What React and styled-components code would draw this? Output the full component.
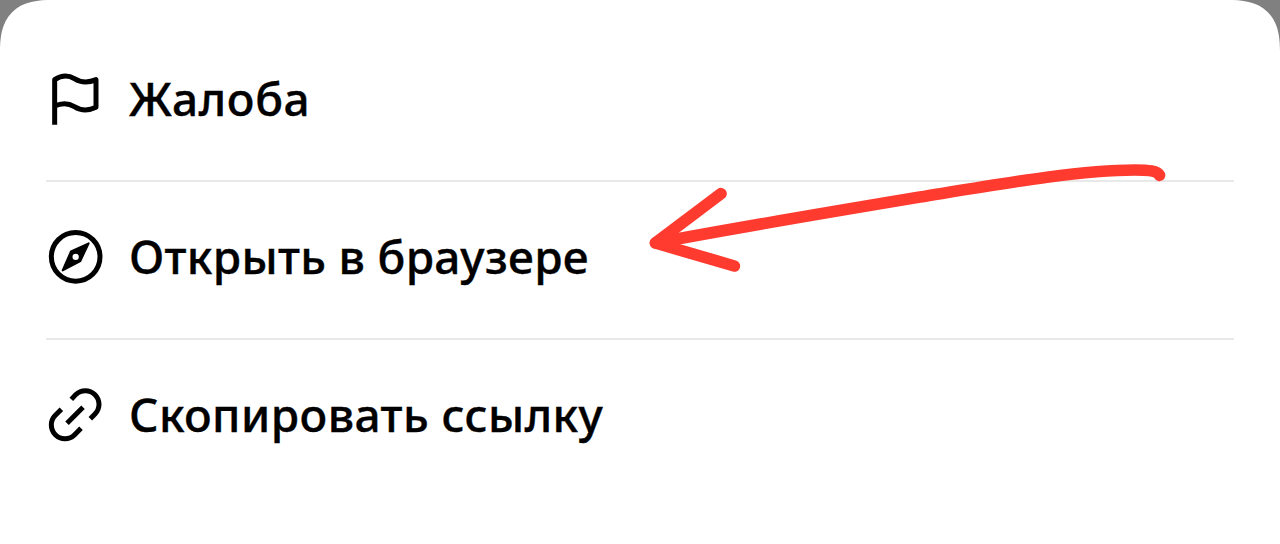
import React from 'react'
import styled, { createGlobalStyle } from 'styled-components'

const GlobalStyle = createGlobalStyle`
  body {
    margin: 0;
    background: #808080;
  }
`

const Sheet = styled.main`
  position: relative;
  box-sizing: border-box;
  height: 544px;
  padding: 24px 46px 0;
  overflow: hidden;
  background: #fff;
  border-radius: 42px 42px 0 0;

  @supports (corner-shape: superellipse(1.38)) {
    border-radius: 52px 52px 0 0;
    corner-shape: superellipse(1.38);
  }
`

const Menu = styled.ul`
  margin: 0;
  padding: 0;
  list-style: none;
`

const Item = styled.li`
  box-sizing: border-box;
  height: 158px;
  padding: 0 0 6px;
  display: flex;
  align-items: center;
  border-bottom: 2px solid #e9e9e9;

  &:last-child {
    border-bottom-color: transparent;
  }
`

const Icon = styled.svg`
  flex: none;
  width: 70px;
  height: 70px;
  margin-left: -6px;
  fill: none;
  stroke: #000;
  stroke-width: 15;
  stroke-linejoin: round;
`

const Label = styled.span`
  margin-left: 19px;
  padding-bottom: 2px;
  color: #000;
  font-family: 'Noto Sans', 'Open Sans', sans-serif;
  font-size: 46px;
  font-weight: 500;
  line-height: 60px;
  letter-spacing: ${props => props.$spacing};
  white-space: nowrap;
  -webkit-text-stroke: 0.4px #000;
`

// Hand-drawn pointer lying over the menu
const Arrow = styled.svg`
  position: absolute;
  top: 150px;
  left: 640px;
  width: 540px;
  height: 130px;
  fill: none;
  stroke: #ff3b30;
  stroke-width: 11.7;
  stroke-linecap: round;
  stroke-linejoin: round;
`

const FlagIcon = () => (
  <Icon viewBox="0 0 210 210">
    <path d="M44 182V47C62 35 84 32 103 44C122 56 145 57 168 47V130C145 141 122 140 103 128C84 116 64 117 44 126" />
  </Icon>
)

const CompassIcon = () => (
  <Icon viewBox="0 0 210 210">
    <circle cx="107" cy="104.500" r="73" />
    <path
      d="M146 64L121 117L68 145L93 88Z M107 95a9.500 9.500 0 1 0 0 19a9.500 9.500 0 1 0 0 -19Z"
      fill="#000"
      fillRule="evenodd"
      stroke="none"
    />
    <path d="M146 64L121 117L68 145L93 88Z" strokeWidth="6" />
  </Icon>
)

const LinkIcon = () => (
  <Icon viewBox="0 0 210 210">
    <path d="M94 58L107 44A41 41 0 0 1 165 102L151 116" />
    <path d="M64 88L46 106A41 41 0 0 0 104 164L123 145" />
    <path d="M81 130L129 82" />
  </Icon>
)

const App = () => (
  <>
    <GlobalStyle />
    <Sheet>
      <Menu>
        <Item>
          <FlagIcon />
          <Label $spacing="0.6px">Жалоба</Label>
        </Item>
        <Item>
          <CompassIcon />
          <Label $spacing="0.33px">Открыть в браузере</Label>
        </Item>
        <Item>
          <LinkIcon />
          <Label $spacing="0.43px">Скопировать ссылку</Label>
        </Item>
      </Menu>
      <Arrow viewBox="640 150 540 130" aria-hidden="true">
        <path d="M721 193.700L655.500 243L734.300 266" />
        <path d="M655.500 243C740 227 830 212 920 197C1000 184 1080 170 1135 170C1149 170 1157 171 1159.500 175.300" />
      </Arrow>
    </Sheet>
  </>
)

export default App
